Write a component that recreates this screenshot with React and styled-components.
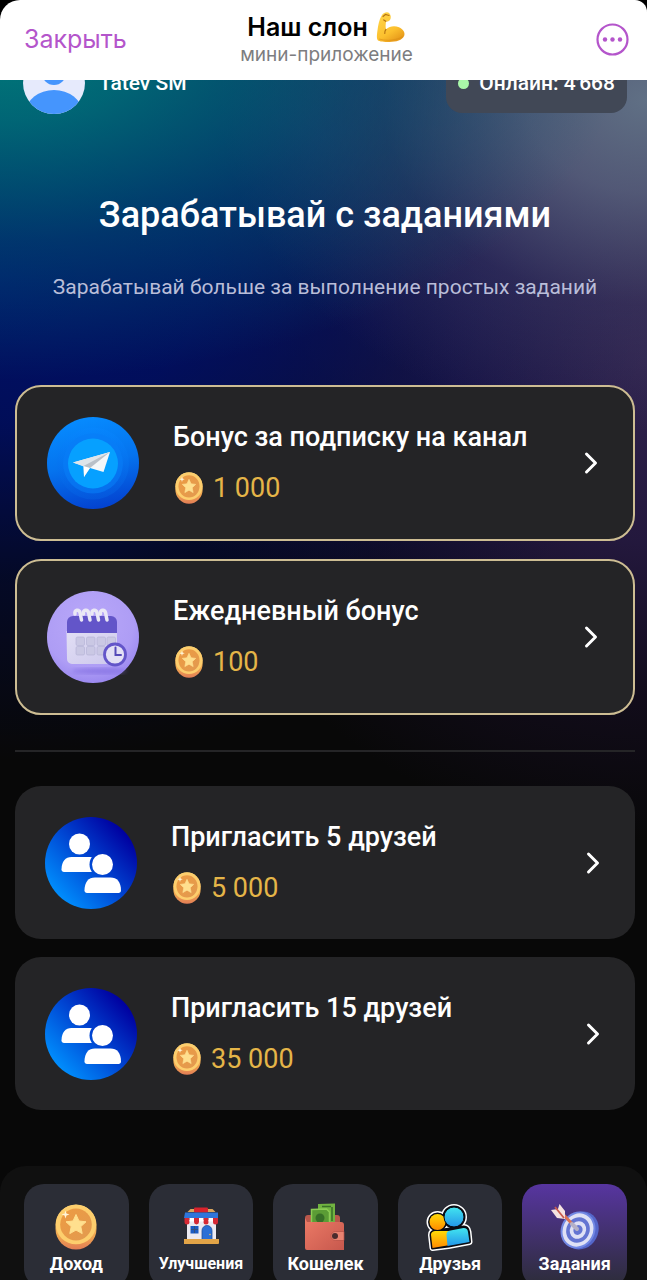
import React, { useState } from "react";
import styled, { createGlobalStyle, css } from "styled-components";

const GlobalStyle = createGlobalStyle`
  * {
    box-sizing: border-box;
  }

  body {
    margin: 0;
    background: #080808;
    font-family: Roboto, "Liberation Sans", sans-serif;
    color: #fff;
  }

  h1, h2, p {
    margin: 0;
  }

  button {
    font: inherit;
    color: inherit;
    border: none;
    background: none;
    padding: 0;
    cursor: pointer;
  }

  svg {
    display: block;
    flex-shrink: 0;
  }
`;

const Shell = styled.div`
  display: flex;
  flex-direction: column;
  height: 100vh;
  overflow: hidden;
  background:
    radial-gradient(ellipse 96% 330px at 0 50px, #00787a 0%, rgba(0, 116, 122, 0.85) 22%, rgba(0, 100, 120, 0.45) 58%, rgba(0, 80, 120, 0) 100%),
    radial-gradient(ellipse 66% 330px at 100% 100px, #607085 0%, rgba(94, 104, 130, 0.8) 28%, rgba(76, 76, 114, 0.35) 62%, rgba(50, 44, 90, 0) 100%),
    radial-gradient(ellipse 105% 480px at 0 280px, #001068 0%, rgba(0, 14, 98, 0.88) 30%, rgba(0, 11, 76, 0.45) 62%, rgba(0, 8, 50, 0) 100%),
    radial-gradient(ellipse 76% 480px at 100% 360px, #30224c 0%, rgba(42, 28, 74, 0.8) 38%, rgba(32, 18, 54, 0.4) 70%, rgba(20, 10, 30, 0) 100%),
    radial-gradient(ellipse 75% 420px at 50% 140px, #1c3f78 0%, rgba(14, 26, 92, 0.7) 45%, rgba(4, 8, 60, 0) 100%),
    #080808;
`;

const Header = styled.header`
  position: relative;
  z-index: 1;
  flex-shrink: 0;
  display: grid;
  grid-template-columns: 1fr auto 1fr;
  align-items: center;
  height: 80px;
  padding: 0 18px 2px 24px;
  background: #fff;
  border-radius: 20px 12px 0 0;
  box-shadow: 0 -20px 0 #000;
  font-family: Inter, "Liberation Sans", sans-serif;
`;

const CloseButton = styled.button`
  justify-self: start;
  font-size: 25px;
  line-height: 32px;
  color: #b455cb;
`;

const HeaderTitle = styled.div`
  text-align: center;
`;

const AppName = styled.h1`
  display: flex;
  align-items: center;
  justify-content: center;
  gap: 8px;
  font-size: 25px;
  font-weight: 600;
  line-height: 30px;
  color: #000;
`;

const AppKind = styled.p`
  font-size: 19px;
  line-height: 24px;
  color: #7d7d80;
`;

const MenuButton = styled.button`
  justify-self: end;
`;

const Content = styled.main`
  flex-shrink: 0;
  margin-top: -28px;
  padding: 0 12px 0 15px;
`;

const Profile = styled.div`
  display: flex;
  align-items: center;
  justify-content: space-between;
  padding: 0 8px;
`;

const User = styled.div`
  display: flex;
  align-items: center;
  gap: 14px;
  font-size: 21px;
  font-weight: 500;
`;

const Online = styled.div`
  display: flex;
  align-items: center;
  gap: 10px;
  height: 60px;
  padding: 0 12px;
  border-radius: 16px;
  background: #414856;
  font-size: 21px;
  font-weight: 500;

  &::before {
    content: "";
    width: 11px;
    height: 11px;
    border-radius: 50%;
    background: #a9f7a9;
  }
`;

const Intro = styled.section`
  padding: 80px 0 85px;
  text-align: center;
`;

const IntroTitle = styled.h2`
  font-size: 36px;
  font-weight: 500;
  line-height: 42px;
`;

const IntroText = styled.p`
  margin-top: 38px;
  font-size: 21px;
  line-height: 26px;
  color: #b9bdd8;
`;

const TaskList = styled.div`
  display: flex;
  flex-direction: column;
  gap: 18px;
`;

const Divider = styled.hr`
  height: 2px;
  margin: 35px 0 34px;
  border: none;
  background: #252527;
`;

const TaskCard = styled.button`
  display: flex;
  align-items: center;
  gap: 34px;
  width: 100%;
  min-height: 153px;
  padding: 30px 35px 30px 30px;
  border-radius: 26px;
  background: #242426;
  text-align: left;

  ${({ $highlighted }) =>
    $highlighted &&
    css`
      border: 2px solid #cdbd93;
    `}
`;

const TaskInfo = styled.div`
  flex: 1;
  display: flex;
  flex-direction: column;
  gap: 18px;
`;

const TaskTitle = styled.span`
  font-size: 27px;
  font-weight: 500;
  line-height: 32px;
`;

const Reward = styled.span`
  display: flex;
  align-items: center;
  gap: 10px;
  padding-left: 2px;
  font-size: 27px;
  line-height: 34px;
  color: #e5b548;
`;

const Nav = styled.nav`
  flex-shrink: 0;
  display: grid;
  grid-template-columns: repeat(5, 1fr);
  gap: 20px;
  margin-top: 56px;
  padding: 18px 20px 18px 24px;
  border-radius: 26px 26px 0 0;
  background: #101010;
`;

const NavItem = styled.a`
  display: flex;
  flex-direction: column;
  align-items: center;
  gap: 2px;
  height: 104px;
  padding-top: 20px;
  border-radius: 20px;
  background: ${({ $active }) =>
    $active ? "linear-gradient(#5735a0, #2b2c36)" : "#2b2d36"};
  color: #fff;
  text-decoration: none;
`;

const NavIcon = styled.span`
  display: flex;
  align-items: center;
  justify-content: center;
  height: 46px;
`;

const NavLabel = styled.span`
  font-size: ${({ $small }) => ($small ? "16px" : "18px")};
  font-weight: 700;
  line-height: 24px;
`;

const ArmIcon = () => (
  <svg width="30" height="32" viewBox="0 0 30 32" aria-hidden="true">
    <defs>
      <linearGradient id="arm" x1="0" y1="0" x2="0.6" y2="1">
        <stop offset="0" stopColor="#ffd84d" />
        <stop offset="0.7" stopColor="#fcc02e" />
        <stop offset="1" stopColor="#e99d1c" />
      </linearGradient>
    </defs>
    <path
      d="M6 4C8 1 12 .6 13.500 2.400c1.400 1.600 1.800 4.400.6 6.400-.9 1.500-2.600 2-4 1.600-.6 3-.6 5.600-.1 8C13.500 15 18.500 14.300 23 16.200c4.200 1.800 6.400 5.400 5.200 8.600C26.500 29.200 20 31 13.500 31 8 31 3.400 30.600 1.800 29.200.6 28 .8 24 1.400 20 2.200 14 3 8.500 6 4z"
      fill="url(#arm)"
    />
    <path d="M7 5.500l2.500-2 3.500 1M9.800 10.300l-2-1.400M10 18.400c-1 1.200-1.400 2.600-1.200 4" fill="none" stroke="#b77412" strokeWidth="1.200" strokeLinecap="round" />
    <path d="M3 28c7 2 18 1.800 24-2.500" fill="none" stroke="#dc8f16" strokeWidth="1.200" opacity=".6" />
  </svg>
);

const MoreIcon = () => (
  <svg width="33" height="33" viewBox="0 0 33 33" aria-hidden="true">
    <circle cx="16.500" cy="16.500" r="15" fill="none" stroke="#b455cb" strokeWidth="2.200" />
    <circle cx="9" cy="16.500" r="2.200" fill="#b455cb" />
    <circle cx="16.500" cy="16.500" r="2.200" fill="#b455cb" />
    <circle cx="24" cy="16.500" r="2.200" fill="#b455cb" />
  </svg>
);

const Avatar = () => (
  <svg width="62" height="62" viewBox="0 0 62 62" aria-hidden="true">
    <defs>
      <clipPath id="avatarClip">
        <circle cx="31" cy="31" r="31" />
      </clipPath>
    </defs>
    <g clipPath="url(#avatarClip)">
      <rect width="62" height="62" fill="#e6eafc" />
      <circle cx="31" cy="21" r="12" fill="#4595fd" />
      <ellipse cx="31" cy="60" rx="28" ry="22" fill="#4595fd" />
    </g>
  </svg>
);

const CoinIcon = ({ width = 28, height = 32 }) => (
  <svg width={width} height={height} viewBox="0 0 42 46" preserveAspectRatio="none" aria-hidden="true">
    <defs>
      <linearGradient id="coinEdge" x1="0" y1="0" x2="0" y2="1">
        <stop offset="0" stopColor="#ffd978" />
        <stop offset="0.7" stopColor="#f0a650" />
        <stop offset="1" stopColor="#e27d55" />
      </linearGradient>
      <linearGradient id="coinFace" x1="0" y1="0" x2="1" y2="1">
        <stop offset="0" stopColor="#ed9b42" />
        <stop offset="1" stopColor="#e29a50" />
      </linearGradient>
    </defs>
    <rect x="0.500" y="0.500" width="41" height="45" rx="20.500" fill="url(#coinEdge)" />
    <ellipse cx="21" cy="20.500" rx="20.200" ry="19.800" fill="#fdce6d" />
    <ellipse cx="21" cy="20.500" rx="15.800" ry="16" fill="url(#coinFace)" />
    <path d="M21 10.500l3 6.500 7 .8-5.200 4.800 1.400 7-6.200-3.500-6.200 3.500 1.400-7-5.200-4.800 7-.8z" fill="#ffdf8e" stroke="#ffdf8e" strokeWidth="1" strokeLinejoin="round" />
    <path d="M10.500 6.500l1 3 3 1-3 1-1 3-1-3-3-1 3-1z" fill="#fff4d6" />
  </svg>
);

const TelegramIcon = () => (
  <svg width="92" height="92" viewBox="0 0 92 92" aria-hidden="true">
    <defs>
      <linearGradient id="tgOuter" x1="0.400" y1="0" x2="0.600" y2="1">
        <stop offset="0" stopColor="#068bff" />
        <stop offset="0.500" stopColor="#0573ee" />
        <stop offset="1" stopColor="#0341cf" />
      </linearGradient>
      <linearGradient id="tgMid" x1="0" y1="0" x2="0" y2="1">
        <stop offset="0" stopColor="#0787ff" />
        <stop offset="1" stopColor="#0560e2" />
      </linearGradient>
    </defs>
    <circle cx="46" cy="46" r="46" fill="url(#tgOuter)" />
    <circle cx="46" cy="46.500" r="36" fill="url(#tgMid)" opacity=".5" />
    <circle cx="46" cy="46.500" r="30" fill="#087df6" opacity=".6" />
    <circle cx="46" cy="46.500" r="25" fill="#06a0ff" />
    <path d="M26 45.500L63 35 56.500 55 43 51z" fill="#f4f7f9" />
    <path d="M26 45.500L63 35 38 50z" fill="#dfe5ea" />
    <path d="M36.500 49L63 35 43 51 37 60z" fill="#b9c0c8" />
    <path d="M36.500 49l6.500 2-6 9z" fill="#fff" />
  </svg>
);

const CalendarIcon = () => (
  <svg width="92" height="92" viewBox="0 0 92 92" aria-hidden="true">
    <defs>
      <radialGradient id="calBg" cx="0.450" cy="0.350" r="0.700">
        <stop offset="0" stopColor="#b9a8f9" />
        <stop offset="0.700" stopColor="#ae9df5" />
        <stop offset="1" stopColor="#9784ef" />
      </radialGradient>
      <linearGradient id="calPage" x1="0" y1="0" x2="1" y2="1">
        <stop offset="0" stopColor="#e2dff4" />
        <stop offset="1" stopColor="#cdc8ed" />
      </linearGradient>
      <filter id="calSoft">
        <feGaussianBlur stdDeviation="2" />
      </filter>
    </defs>
    <circle cx="46" cy="46" r="46" fill="url(#calBg)" />
    <ellipse cx="52" cy="80" rx="27" ry="3" fill="#7a66de" opacity=".6" filter="url(#calSoft)" />
    <path d="M19.500 40h50.500v28a5 5 0 0 1-5 5H25a5 5 0 0 1-5-5z" fill="url(#calPage)" />
    <path d="M20 31a6 6 0 0 1 6-6h38a6 6 0 0 1 6 6v11H20z" fill="#6355c9" />
    {[28, 36.500, 45, 53.500].map((x) => (
      <path key={x} d={`M${x} 23c-1-4.500 4-5 5-1.500l1.500 7.500`} fill="none" stroke="#eae8f5" strokeWidth="3.500" strokeLinecap="round" />
    ))}
    {[46, 55.500].map((y) =>
      [29, 39.500, 50, 60].map((x) => (
        <rect key={`${x}-${y}`} x={x} y={y} width="8.500" height="8.500" rx="1.500" fill="#cac8e4" stroke="#b2b0d4" strokeWidth=".6" />
      ))
    )}
    <circle cx="68" cy="63.500" r="10.500" fill="#e3e0f5" stroke="#6355c9" strokeWidth="2.800" />
    <path d="M68.500 56.500v7.500h5.500" fill="none" stroke="#5449b8" strokeWidth="2" strokeLinecap="round" />
  </svg>
);

const InviteIcon = () => (
  <svg width="92" height="92" viewBox="0 0 92 92" aria-hidden="true">
    <defs>
      <linearGradient id="invite" x1="0.100" y1="0.850" x2="0.850" y2="0.150">
        <stop offset="0" stopColor="#0092ff" />
        <stop offset="0.500" stopColor="#0048d4" />
        <stop offset="1" stopColor="#0000a0" />
      </linearGradient>
      <mask id="inviteMask">
        <rect width="92" height="92" fill="#fff" />
        <circle cx="57.500" cy="47.500" r="13" fill="#000" />
      </mask>
    </defs>
    <circle cx="46" cy="46" r="46" fill="url(#invite)" />
    <circle cx="34.500" cy="27" r="10.500" fill="#fff" />
    <path d="M16.500 52.500c0-8 4-12.500 10-12.500h17c5 0 8 2 9 5v10H19c-1.500 0-2.500-1-2.500-2.500z" fill="#fff" mask="url(#inviteMask)" />
    <circle cx="57.500" cy="47.500" r="10.500" fill="#fff" />
    <path d="M39.500 73.500C39.500 65 43.500 60.500 50 60.500h15.500c6.500 0 10.500 4.500 10.500 13 0 1.500-1 2.500-2.500 2.500H42c-1.500 0-2.500-1-2.500-2.500z" fill="#fff" />
  </svg>
);

const ChevronIcon = () => (
  <svg width="14" height="24" viewBox="0 0 14 24" aria-hidden="true">
    <path d="M2.500 3L11.500 12 2.500 21" fill="none" stroke="#fff" strokeWidth="3" strokeLinecap="round" strokeLinejoin="round" />
  </svg>
);

const ShopIcon = () => (
  <svg width="50" height="42" viewBox="0 0 50 42" aria-hidden="true">
    <rect x="11" y="14" width="29" height="24" fill="#eceaf2" />
    <path d="M11.500 6l3-3h22l3 3z" fill="#dca75e" />
    <rect x="18" y="1.500" width="14" height="5" rx="1" fill="#d8232c" />
    <path d="M9 6.500h33v5.500H8z" fill="#2f76da" />
    {[8.500, 18, 27.500, 37].map((x) => (
      <path key={x} d={`M${x} 12h5v4a2 2 0 0 1-5 0z`} fill="#d62935" />
    ))}
    {[13.500, 23, 32.500].map((x) => (
      <path key={x} d={`M${x} 12h4.500v3.500h-4.500z`} fill="#fff" />
    ))}
    <rect x="14.500" y="20" width="8" height="7.500" fill="#1c5cc4" />
    <path d="M18.500 20v7M15 23.500h7" stroke="#34507f" strokeWidth="1" />
    <path d="M26 34v-9.500a5 5 0 0 1 10 0V34z" fill="#2b6fd6" stroke="#24509c" strokeWidth=".8" />
    <circle cx="34" cy="28.500" r=".8" fill="#f1c04f" />
    <path d="M8 33h35v4a1 1 0 0 1-1 1H8z" fill="#e2a447" />
  </svg>
);

const WalletIcon = () => (
  <svg width="42" height="50" viewBox="0 0 42 50" aria-hidden="true">
    <defs>
      <linearGradient id="wallet" x1="0" y1="0" x2="1" y2="1">
        <stop offset="0" stopColor="#ec7a66" />
        <stop offset="1" stopColor="#c7584d" />
      </linearGradient>
    </defs>
    <rect x="1" y="13" width="35" height="18" rx="3" fill="#b9574b" />
    <path d="M14 2l17-.5v24H14z" fill="#71b340" />
    <path d="M7.500 7.500l15-.5 3 3V25h-18z" fill="#5b9c35" stroke="#8bcc55" strokeWidth="1.500" />
    <circle cx="16" cy="16" r="4.500" fill="#376f27" />
    <path d="M18 4.500h9M28 5v14" stroke="#396f28" strokeWidth="1.500" />
    <path d="M1 16l2 4h34a3 3 0 0 1 3 3v25H3a2 2 0 0 1-2-2z" fill="url(#wallet)" />
    <path d="M27 34a4.500 4.500 0 0 1 4.500-4.500H40v9h-8.500A4.500 4.500 0 0 1 27 34z" fill="#e98270" stroke="#b44f45" strokeWidth=".7" />
    <circle cx="31" cy="34" r="3" fill="#4b2b2d" />
  </svg>
);

const FriendsIcon = () => (
  <svg width="50" height="48" viewBox="0 0 50 48" aria-hidden="true">
    <defs>
      <linearGradient id="friendBlue" x1="0" y1="0" x2="0" y2="1">
        <stop offset="0" stopColor="#42e5ef" />
        <stop offset="1" stopColor="#2396e9" />
      </linearGradient>
      <linearGradient id="friendYellow" x1="0" y1="0" x2="0" y2="1">
        <stop offset="0" stopColor="#ffda08" />
        <stop offset="1" stopColor="#ff8b00" />
      </linearGradient>
    </defs>
    {[
      ["#fff", 6],
      ["#090b12", 3],
    ].map(([color, width]) => (
      <g key={color} fill={color} stroke={color} strokeWidth={width} strokeLinejoin="round">
        <circle cx="12.500" cy="19" r="8" />
        <circle cx="29" cy="14" r="10" />
        <path d="M6 32c0-3 2-4 5-4l28-4c3 0 4 2 4.500 5l1 10-21 4-16 2z" />
      </g>
    ))}
    <circle cx="12.500" cy="19" r="8" fill="url(#friendYellow)" />
    <path d="M6 32c0-3 2-4 5-4h13l1 14-17.500 3z" fill="url(#friendYellow)" />
    <circle cx="29" cy="14" r="10" fill="url(#friendBlue)" stroke="#090b12" strokeWidth="1" />
    <path d="M21.500 32c0-3 1-4 4-4.500l13-2.500c3 0 4 1 4.500 4l1.500 10-22 4z" fill="url(#friendBlue)" />
  </svg>
);

const TargetIcon = () => (
  <svg width="50" height="48" viewBox="0 0 50 48" aria-hidden="true">
    <g transform="rotate(28 28 27)">
      <ellipse cx="31" cy="26" rx="17" ry="19.500" fill="#5466c9" />
      <ellipse cx="28" cy="27" rx="17" ry="19" fill="#7288e4" />
      <ellipse cx="28" cy="27" rx="15" ry="17" fill="#dfe1f5" />
      <ellipse cx="28" cy="27" rx="11.500" ry="13" fill="#6475d2" />
      <ellipse cx="28" cy="27" rx="8" ry="9" fill="#dfe1f5" />
      <ellipse cx="28" cy="27" rx="4.500" ry="5" fill="#6475d2" />
    </g>
    <path d="M9 7l17 18" stroke="#dc7355" strokeWidth="3" strokeLinecap="round" />
    <path d="M1 7l7-1 1.500-5L15 8v8l-8-1z" fill="#f6e3e1" />
    <path d="M5 4l9 11" stroke="#c95b4d" strokeWidth="1.800" />
    <path d="M22 21l5 5" stroke="#b4b0c6" strokeWidth="4" strokeLinecap="round" />
  </svg>
);

const bonusTasks = [
  { title: "Бонус за подписку на канал", reward: "1 000", icon: <TelegramIcon /> },
  { title: "Ежедневный бонус", reward: "100", icon: <CalendarIcon /> },
];

const inviteTasks = [
  { title: "Пригласить 5 друзей", reward: "5 000", icon: <InviteIcon /> },
  { title: "Пригласить 15 друзей", reward: "35 000", icon: <InviteIcon /> },
];

const navItems = [
  { id: "income", label: "Доход", icon: <CoinIcon width={42} height={46} /> },
  { id: "upgrades", label: "Улучшения", icon: <ShopIcon />, small: true },
  { id: "wallet", label: "Кошелек", icon: <WalletIcon /> },
  { id: "friends", label: "Друзья", icon: <FriendsIcon /> },
  { id: "tasks", label: "Задания", icon: <TargetIcon /> },
];

const Task = ({ title, reward, icon, highlighted }) => (
  <TaskCard type="button" $highlighted={highlighted}>
    {icon}
    <TaskInfo>
      <TaskTitle>{title}</TaskTitle>
      <Reward>
        <CoinIcon />
        {reward}
      </Reward>
    </TaskInfo>
    <ChevronIcon />
  </TaskCard>
);

const App = () => {
  const [activeTab, setActiveTab] = useState("tasks");

  return (
    <>
      <GlobalStyle />
      <Shell>
        <Header>
          <CloseButton type="button">Закрыть</CloseButton>
          <HeaderTitle>
            <AppName>
              Наш слон
              <ArmIcon />
            </AppName>
            <AppKind>мини-приложение</AppKind>
          </HeaderTitle>
          <MenuButton type="button" aria-label="Меню">
            <MoreIcon />
          </MenuButton>
        </Header>

        <Content>
          <Profile>
            <User>
              <Avatar />
              Tatev SM
            </User>
            <Online>Онлайн: 4'668</Online>
          </Profile>

          <Intro>
            <IntroTitle>Зарабатывай с заданиями</IntroTitle>
            <IntroText>Зарабатывай больше за выполнение простых заданий</IntroText>
          </Intro>

          <TaskList>
            {bonusTasks.map((task) => (
              <Task key={task.title} {...task} highlighted />
            ))}
          </TaskList>
          <Divider />
          <TaskList>
            {inviteTasks.map((task) => (
              <Task key={task.title} {...task} />
            ))}
          </TaskList>
        </Content>

        <Nav>
          {navItems.map(({ id, label, icon, small }) => (
            <NavItem
              key={id}
              href={`#${id}`}
              $active={activeTab === id}
              onClick={() => setActiveTab(id)}
            >
              <NavIcon>{icon}</NavIcon>
              <NavLabel $small={small}>{label}</NavLabel>
            </NavItem>
          ))}
        </Nav>
      </Shell>
    </>
  );
};

export default App;
